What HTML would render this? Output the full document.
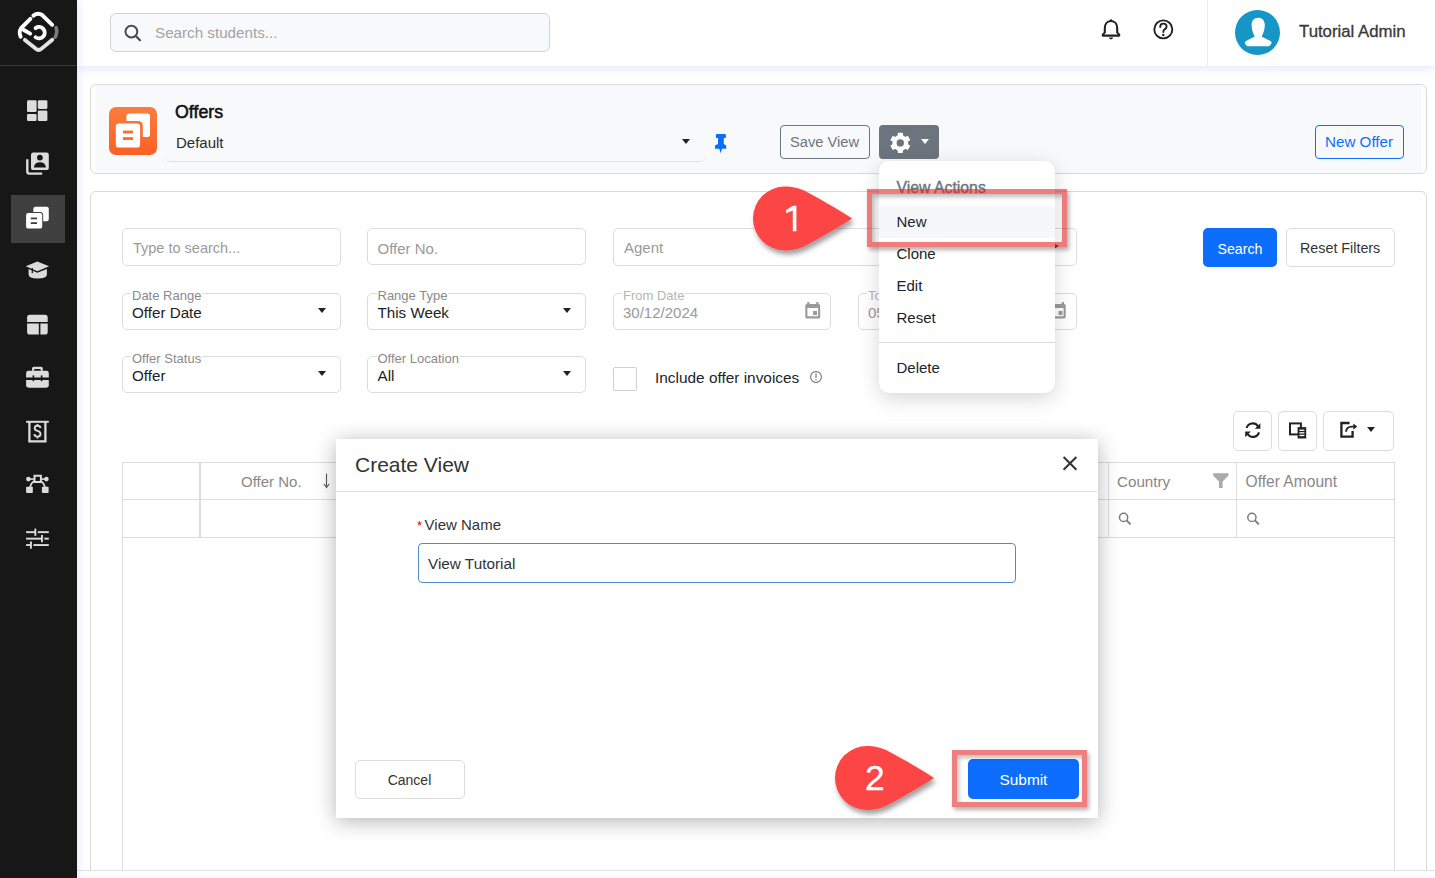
<!DOCTYPE html>
<html><head><meta charset="utf-8">
<style>
*{box-sizing:border-box;margin:0;padding:0}
html,body{width:1435px;height:878px;overflow:hidden;background:#fff;font-family:"Liberation Sans",sans-serif;color:#212529}
.a{position:absolute}
.t{position:absolute;line-height:1;white-space:nowrap}
svg{position:absolute;overflow:visible}
#sidebar{left:0;top:0;width:77px;height:878px;background:#171717;z-index:5;box-shadow:2px 0 7px rgba(120,120,240,.16)}
#header{left:77px;top:0;width:1358px;height:66px;background:#fff;z-index:4;box-shadow:0 2px 9px rgba(110,110,235,.2)}
.inp{position:absolute;border:1px solid #dcdcdc;border-radius:5px;background:#fff}
.fs{position:absolute;border:1px solid #dcdcdc;border-radius:5px;background:#fff}
.lbl{position:absolute;line-height:1;white-space:nowrap;background:#fff;padding:0 1px;font-size:13px;color:#8a8a8a;margin-top:0.9px}
.car{position:absolute;width:0;height:0;border-left:4.5px solid transparent;border-right:4.5px solid transparent;border-top:5px solid #222}
.btn{position:absolute;border-radius:5px}
.ln{position:absolute;background:#dcdcdc}
</style></head><body>

<!-- SIDEBAR -->
<div id="sidebar" class="a">
  <div class="a" style="left:0;top:65px;width:76px;height:1px;background:#3a3a3a"></div>
  <div class="a" style="left:11px;top:195px;width:54px;height:48px;background:#404040"></div>
  <svg style="left:0;top:0" width="77" height="878" viewBox="0 0 77 878">
    <!-- logo -->
    <g fill="none" stroke-linecap="round" stroke-width="3.9">
      <path d="M33.4,15.6 Q37.8,12.2 42.2,15 L52.2,24.8" stroke="#fff"/>
      <path d="M56.1,27.6 Q57.8,32.2 55.2,37.2" stroke="#7c7c7c" stroke-width="3.5"/>
      <path d="M24.9,39.9 L35.6,48.6 Q38.6,51.2 41.6,48.6 L52.3,39.7" stroke="#e2e2e2"/>
      <path d="M30.4,18.8 L21.4,27.8 Q19.2,30.4 19.7,33.4 L20.6,36.8" stroke="#fff"/>
      <path d="M23.8,30 L30.2,33.6" stroke="#fff"/>
      <path d="M35.6,28.1 A5.7,5.7 0 1 1 35.6,37.3" stroke="#fff"/>
    </g>
    <g fill="#dcdcdc">
      <!-- dashboard -->
      <rect x="27" y="100.3" width="9.6" height="11.8" rx="1.3"/>
      <rect x="27" y="113.9" width="9.6" height="7.2" rx="1.3"/>
      <rect x="37.8" y="100.3" width="9.6" height="8.6" rx="1.3"/>
      <rect x="37.8" y="110.5" width="9.6" height="10.6" rx="1.3"/>
      <!-- contacts -->
      <rect x="31" y="152.5" width="17.8" height="17.6" rx="2.2"/>
      <path d="M27.3,159.3 V171.5 Q27.3,173.6 29.4,173.6 H42.2" fill="none" stroke="#dcdcdc" stroke-width="2.4"/>
      <circle cx="39.9" cy="157.6" r="2.9" fill="#171717"/>
      <path d="M33.8,167.6 Q34.5,162.2 39.9,162.2 Q45.3,162.2 46,167.6 Z" fill="#171717"/>
      <!-- grad cap -->
      <path d="M25.8,266.3 L37.3,261.6 L49.1,266.3 L37.3,271.2 Z"/>
      <path d="M28.6,269 L37.3,272.8 L46.9,269 V274.5 Q46.9,278.5 37.5,278.5 Q28.6,278.5 28.6,274.5 Z"/>
      <rect x="31.7" y="268" width="1.2" height="5.2" fill="#171717"/>
      <!-- layout -->
      <path d="M27.1,322 V317.4 Q27.1,314.7 29.8,314.7 H45 Q47.7,314.7 47.7,317.4 V322 Z"/>
      <path d="M27.1,323.6 H38.8 V334.6 H29.8 Q27.1,334.6 27.1,331.9 Z"/>
      <path d="M40.4,323.6 H47.7 V331.9 Q47.7,334.6 45,334.6 H40.4 Z"/>
      <!-- briefcase -->
      <path d="M32,370.8 V368.5 Q32,366.7 33.8,366.7 H41 Q42.8,366.7 42.8,368.5 V370.8 H40.6 V368.9 H34.2 V370.8 Z"/>
      <path d="M26.1,377.4 V373.2 Q26.1,370.8 28.5,370.8 H46.4 Q48.8,370.8 48.8,373.2 V377.4 Z"/>
      <path d="M26.1,380 H48.8 V385.3 Q48.8,387.7 46.4,387.7 H28.5 Q26.1,387.7 26.1,385.3 Z"/>
      <rect x="32.6" y="375.4" width="1.6" height="5.8" fill="#171717"/>
      <rect x="40.8" y="375.4" width="1.6" height="5.8" fill="#171717"/>
      <!-- dollar doc -->
      <rect x="26.1" y="420.8" width="22.7" height="2"/>
      <path d="M29.4,422 V441.4 H45.4 V422" fill="none" stroke="#dcdcdc" stroke-width="2.3"/>
      <path d="M40.6,428 Q40.2,425.8 37.5,425.8 Q34.7,425.8 34.7,428.2 Q34.7,430.3 37.5,430.9 Q40.5,431.5 40.5,434 Q40.5,436.6 37.5,436.6 Q34.7,436.6 34.3,434.2 M37.5,424 V425.8 M37.5,436.6 V438.6" fill="none" stroke="#dcdcdc" stroke-width="1.9"/>
      <!-- bezier -->
      <path d="M33.5,474.7 H41.9 V482.9 H33.5 Z M35.5,476.7 V480.9 H39.9 V476.7 Z" fill-rule="evenodd"/>
      <circle cx="28.4" cy="479.1" r="2.3"/>
      <circle cx="46.4" cy="479.1" r="2.3"/>
      <rect x="28.4" y="478.3" width="5.5" height="1.6"/>
      <rect x="41.5" y="478.3" width="5" height="1.6"/>
      <path d="M30,487.5 Q31.5,481.5 35.2,481.2 M45,487.5 Q43.5,481.5 39.8,481.2" fill="none" stroke="#dcdcdc" stroke-width="1.8"/>
      <rect x="26.1" y="486.7" width="6.7" height="6.3" rx=".8"/>
      <rect x="41.9" y="486.7" width="6.7" height="6.3" rx=".8"/>
      <!-- sliders -->
      <rect x="26.1" y="531.2" width="22.7" height="1.9"/>
      <rect x="26.1" y="537.7" width="22.7" height="1.9"/>
      <rect x="26.1" y="544.1" width="22.7" height="1.9"/>
      <rect x="34.4" y="528.6" width="1.9" height="7.2"/>
      <rect x="41" y="535" width="1.9" height="7.2"/>
      <rect x="30" y="541.5" width="1.9" height="7.2"/>
      <rect x="36.3" y="531" width="1.5" height="2.3" fill="#171717"/>
      <rect x="42.9" y="537.5" width="1.5" height="2.3" fill="#171717"/>
      <rect x="31.9" y="544" width="1.5" height="2.3" fill="#171717"/>
    </g>
    <!-- offers active -->
    <g fill="#fff">
      <rect x="33.3" y="206.7" width="15.5" height="14.5" rx="2.2"/>
      <rect x="25.1" y="212.1" width="18.1" height="17.5" rx="3" fill="#404040"/>
      <rect x="26.1" y="213.1" width="16.1" height="15.5" rx="2.2"/>
      <rect x="30.8" y="217.5" width="6.2" height="1.8" fill="#404040"/>
      <rect x="30.8" y="222.2" width="6.2" height="1.8" fill="#404040"/>
    </g>
  </svg>
</div>

<!-- HEADER -->
<div id="header" class="a"></div>
<div class="a" style="z-index:6;left:110px;top:13px;width:440px;height:39px;background:#f8f9fb;border:1px solid #d3d3d3;border-radius:6px"></div>
<div class="t" style="z-index:6;left:155px;top:25px;font-size:15.2px;color:#a3a3a3">Search students...</div>
<div class="a" style="z-index:6;left:1207px;top:0;width:1px;height:66px;background:#ececec"></div>
<div class="a" style="z-index:6;left:1235px;top:10px;width:45px;height:45px;border-radius:50%;background:#1596c7"></div>
<div class="t" style="z-index:6;left:1299px;top:24.4px;font-size:16.8px;color:#383838;-webkit-text-stroke:0.3px #383838">Tutorial Admin</div>

<svg style="z-index:7;left:0;top:0" width="1435" height="70" viewBox="0 0 1435 70">
  <!-- search icon -->
  <circle cx="131.4" cy="31.6" r="5.9" fill="none" stroke="#444b52" stroke-width="2"/>
  <path d="M135.8,36 L140,40.2" stroke="#444b52" stroke-width="2.2" stroke-linecap="round"/>
  <!-- bell -->
  <path d="M1111,21 C1106.6,21 1104.8,24.6 1104.8,28.2 V32.4 L1102.8,34.6 V35.6 H1119.2 V34.6 L1117.2,32.4 V28.2 C1117.2,24.6 1115.4,21 1111,21 Z" fill="none" stroke="#222" stroke-width="2.1" stroke-linejoin="round"/>
  <path d="M1108.8,37.6 Q1109.2,39.4 1111,39.4 Q1112.8,39.4 1113.2,37.6 Z" fill="#222"/>
  <circle cx="1111" cy="20.4" r="1.2" fill="#222"/>
  <!-- help -->
  <circle cx="1163.3" cy="29.4" r="9" fill="none" stroke="#222" stroke-width="1.9"/>
  <path d="M1160.2,27 Q1160.2,23.6 1163.4,23.6 Q1166.6,23.6 1166.6,26.6 Q1166.6,28.4 1164.6,29.4 Q1163.3,30.2 1163.3,32" fill="none" stroke="#222" stroke-width="1.9" stroke-linecap="round"/>
  <circle cx="1163.3" cy="35" r="1.2" fill="#222"/>
  <!-- avatar person -->
  <path d="M1258.2,17.8 C1253.6,17.8 1251.4,21.2 1251.6,25.6 C1251.8,30 1253.2,34 1254.8,36.6 L1247,40.4 C1244.8,41.4 1244.2,42.6 1245.4,44.2 L1247.4,46.2 H1269 L1271,44.2 C1272.2,42.6 1271.6,41.4 1269.4,40.4 L1261.6,36.6 C1263.2,34 1264.6,30 1264.8,25.6 C1265,21.2 1262.8,17.8 1258.2,17.8 Z" fill="#fff"/>
</svg>

<!-- CARD 1 -->
<div class="a" style="left:90px;top:84px;width:1337px;height:90px;background:#fdfdfe;border:1px solid #d9d9d9;border-radius:6px"><div class="a" style="left:5px;top:0;width:1325px;height:88px;background:#f8f9fa"></div></div>
<div class="a" style="left:109px;top:107px;width:48px;height:48px;border-radius:7px;background:linear-gradient(#fa7c3e,#fc6124)"></div>
<svg style="z-index:3;left:0;top:0" width="1435" height="180" viewBox="0 0 1435 180">
  <g fill="#fff">
    <mask id="om"><rect x="100" y="100" width="70" height="70" fill="#fff"/><rect x="113.4" y="121" width="29.4" height="29.2" rx="4.6" fill="#000"/></mask>
    <rect x="126.4" y="113.5" width="23.6" height="23.6" rx="3.2" mask="url(#om)"/>
    <rect x="115.8" y="123.6" width="24.3" height="24" rx="3.2"/>
    <rect x="123" y="130.6" width="10" height="2.8" fill="#fb6d2e"/>
    <rect x="123" y="137.2" width="10" height="2.8" fill="#fb692b"/>
  </g>
  <!-- pin -->
  <path d="M716.8,134.1 H725 Q725.9,134.1 725.9,135 V137.9 H723.8 V144 L726.2,145.6 V148.8 H722 L720.6,153.2 L719.3,148.8 H715 V145.6 L718,144 V137.9 H715.9 V135 Q715.9,134.1 716.8,134.1 Z" fill="#0d6efd"/>
  <!-- gear -->
  <g transform="translate(900.3,142.9)" fill="#fff">
    <mask id="gm"><rect x="-12" y="-12" width="24" height="24" fill="#fff"/><circle r="3.7" fill="#000"/></mask>
    <g mask="url(#gm)"><circle r="7.9"/><rect x="-2.6" y="-10.1" width="5.2" height="5" rx=".7" transform="rotate(0)"/><rect x="-2.6" y="-10.1" width="5.2" height="5" rx=".7" transform="rotate(60)"/><rect x="-2.6" y="-10.1" width="5.2" height="5" rx=".7" transform="rotate(120)"/><rect x="-2.6" y="-10.1" width="5.2" height="5" rx=".7" transform="rotate(180)"/><rect x="-2.6" y="-10.1" width="5.2" height="5" rx=".7" transform="rotate(240)"/><rect x="-2.6" y="-10.1" width="5.2" height="5" rx=".7" transform="rotate(300)"/></g>
  </g>
</svg>
<div class="t" style="z-index:3;left:175px;top:103.7px;font-size:17.8px;color:#111;-webkit-text-stroke:0.55px #111">Offers</div>
<div class="a" style="left:166px;top:120px;width:539px;height:42px;border-bottom:1px solid #dee2e6;border-radius:0 0 5px 5px"></div>
<div class="t" style="left:176px;top:135.2px;font-size:15px;color:#2b2b2b">Default</div>
<div class="car" style="left:682px;top:139px"></div>
<div class="btn" style="left:780px;top:125px;width:90px;height:34px;border:1px solid #6c757d;border-radius:4px"></div>
<div class="t" style="left:790px;top:135px;font-size:14.7px;color:#6c757d">Save View</div>
<div class="btn" style="left:879px;top:125px;width:60px;height:34px;background:#6c757d;border-radius:4px"></div>
<div class="car" style="left:921px;top:139px;border-top-color:#fff"></div>
<div class="btn" style="left:1315px;top:125px;width:89px;height:34px;border:1px solid #0d6efd;border-radius:4px"></div>
<div class="t" style="left:1325px;top:134.3px;font-size:15.2px;color:#0d6efd">New Offer</div>

<!-- CARD 2 -->
<div class="a" style="left:90px;top:191px;width:1337px;height:720px;background:#fff;border:1px solid #d9d9d9;border-radius:6px"></div>

<div class="inp" style="left:122px;top:228px;width:219px;height:38px"></div>
<div class="t" style="left:133px;top:240.5px;font-size:14.5px;color:#9a9a9a">Type to search...</div>
<div class="inp" style="left:367px;top:228px;width:219px;height:37px"></div>
<div class="t" style="left:377.5px;top:241.1px;font-size:15px;color:#9a9a9a">Offer No.</div>
<div class="inp" style="left:613px;top:228px;width:464px;height:38px"></div>
<div class="t" style="left:624px;top:239.5px;font-size:15px;color:#9a9a9a">Agent</div>
<div class="btn" style="left:1203px;top:228px;width:74px;height:39px;background:#0d6efd"></div>
<div class="t" style="left:1217.5px;top:241.5px;font-size:14.2px;color:#fff">Search</div>
<div class="btn" style="left:1286px;top:228px;width:109px;height:39px;border:1px solid #dcdcdc"></div>
<div class="t" style="left:1300px;top:241.4px;font-size:14.3px;color:#333">Reset Filters</div>

<div class="fs" style="left:122px;top:293px;width:219px;height:37px"></div>
<div class="lbl" style="left:131px;top:288.4px">Date Range</div>
<div class="t" style="left:132px;top:305.1px;font-size:15.2px;color:#222">Offer Date</div>
<div class="car" style="left:318px;top:308px"></div>
<div class="fs" style="left:367px;top:293px;width:219px;height:37px"></div>
<div class="lbl" style="left:376.5px;top:288.4px">Range Type</div>
<div class="t" style="left:377.5px;top:305.1px;font-size:15.2px;color:#222">This Week</div>
<div class="car" style="left:563px;top:308px"></div>
<div class="fs" style="left:613px;top:293px;width:218px;height:37px"></div>
<div class="lbl" style="left:622px;top:288.4px;color:#b5b5b5">From Date</div>
<div class="t" style="left:623px;top:305.3px;font-size:15px;color:#9a9a9a">30/12/2024</div>
<div class="fs" style="left:858px;top:293px;width:219px;height:37px"></div>
<div class="lbl" style="left:867px;top:288.4px;color:#b5b5b5">To Date</div>
<div class="t" style="left:868px;top:305.3px;font-size:15px;color:#9a9a9a">05/01/2025</div>

<div class="fs" style="left:122px;top:356px;width:219px;height:37px"></div>
<div class="lbl" style="left:131px;top:351.2px">Offer Status</div>
<div class="t" style="left:132px;top:368px;font-size:15.2px;color:#222">Offer</div>
<div class="car" style="left:318px;top:371px"></div>
<div class="fs" style="left:367px;top:356px;width:219px;height:37px"></div>
<div class="lbl" style="left:376.5px;top:351.2px">Offer Location</div>
<div class="t" style="left:377.5px;top:368px;font-size:15.2px;color:#222">All</div>
<div class="car" style="left:563px;top:371px"></div>
<div class="a" style="left:613px;top:367px;width:24px;height:24px;border:1px solid #d0d0d0;border-radius:2px"></div>
<div class="t" style="left:655px;top:370px;font-size:15.4px;color:#212529">Include offer invoices</div>

<!-- toolbar -->
<div class="btn" style="left:1233px;top:411px;width:39px;height:40px;border:1px solid #dcdcdc"></div>
<div class="btn" style="left:1278px;top:411px;width:39px;height:40px;border:1px solid #dcdcdc"></div>
<div class="btn" style="left:1323px;top:411px;width:71px;height:40px;border:1px solid #dcdcdc"></div>
<div class="car" style="left:1367px;top:427px"></div>

<!-- table -->
<div class="a" style="left:122px;top:462px;width:1273px;height:420px;border:1px solid #dcdcdc"></div>
<div class="ln" style="left:122px;top:499px;width:1273px;height:1px"></div>
<div class="ln" style="left:122px;top:537px;width:1273px;height:1px"></div>
<div class="ln" style="left:199px;top:462px;width:2px;height:75px"></div>
<div class="ln" style="left:1108px;top:462px;width:1px;height:75px"></div>
<div class="ln" style="left:1236px;top:462px;width:1px;height:75px"></div>
<div class="t" style="left:241px;top:474.1px;font-size:15px;color:#888">Offer No.</div>
<div class="t" style="left:1117px;top:473.7px;font-size:15.2px;color:#888">Country</div>
<div class="t" style="left:1245.5px;top:473.6px;font-size:15.6px;color:#888">Offer Amount</div>

<svg style="z-index:2;left:0;top:0" width="1435" height="878" viewBox="0 0 1435 878">
  <!-- calendars -->
  <g fill="#9a9a9a">
    <path fill-rule="evenodd" d="M805.3,305.6 Q805.3,304 806.9,304 H818.6 Q820.2,304 820.2,305.6 V316.9 Q820.2,318.5 818.6,318.5 H806.9 Q805.3,318.5 805.3,316.9 Z M807.4,307.9 V316.3 H818.1 V307.9 Z"/>
    <rect x="807.2" y="302.1" width="2.3" height="3"/><rect x="816.2" y="302.1" width="2.3" height="3"/>
    <rect x="813" y="311" width="4" height="4"/>
  </g>
  <g fill="#9a9a9a" transform="translate(245.5,0)">
    <path fill-rule="evenodd" d="M805.3,305.6 Q805.3,304 806.9,304 H818.6 Q820.2,304 820.2,305.6 V316.9 Q820.2,318.5 818.6,318.5 H806.9 Q805.3,318.5 805.3,316.9 Z M807.4,307.9 V316.3 H818.1 V307.9 Z"/>
    <rect x="807.2" y="302.1" width="2.3" height="3"/><rect x="816.2" y="302.1" width="2.3" height="3"/>
    <rect x="813" y="311" width="4" height="4"/>
  </g>
  <!-- info -->
  <circle cx="816" cy="377" r="5.4" fill="none" stroke="#777" stroke-width="1.1"/>
  <rect x="815.4" y="373.6" width="1.2" height="4.4" fill="#777"/>
  <rect x="815.4" y="379" width="1.2" height="1.2" fill="#777"/>
  <!-- refresh -->
  <g fill="none" stroke="#222" stroke-width="2.1">
    <path d="M1246.6,428 A6.3,6.3 0 0 1 1258,426.4"/>
    <path d="M1259,432.4 A6.3,6.3 0 0 1 1247.6,434"/>
  </g>
  <path d="M1260.4,423.2 V428.8 H1254.8 Z" fill="#222"/>
  <path d="M1245.2,437.2 V431.6 H1250.8 Z" fill="#222"/>
  <!-- columns -->
  <rect x="1290" y="423.4" width="10.9" height="11" fill="none" stroke="#222" stroke-width="2"/>
  <rect x="1297.6" y="427.1" width="8.6" height="11.4" fill="#222"/>
  <rect x="1299.4" y="429.6" width="5" height="1.3" fill="#fff"/>
  <rect x="1299.4" y="432.2" width="5" height="1.3" fill="#fff"/>
  <rect x="1299.4" y="434.8" width="5" height="1.3" fill="#fff"/>
  <!-- export -->
  <path d="M1349.6,423 H1341.4 V436.7 H1352.6 V431" fill="none" stroke="#222" stroke-width="2.3"/>
  <path d="M1346,431.8 Q1346.4,426.6 1352,426.6 H1354" fill="none" stroke="#222" stroke-width="1.9"/>
  <path d="M1353.4,423.6 L1357.2,426.6 L1353.4,429.8 Z" fill="#222"/>
  <!-- sort arrow -->
  <path d="M326.5,473.6 V486" stroke="#555" stroke-width="1.1"/>
  <path d="M324,484 L326.5,487.6 L329,484" fill="none" stroke="#555" stroke-width="1.1"/>
  <path d="M1051,242 L1059.2,246 L1051,250.1 Z" fill="#222"/>
  <!-- funnel -->
  <path d="M1213.1,473.2 H1228.5 V475.4 L1222.6,481.4 V487.9 H1219 V481.4 L1213.1,475.4 Z" fill="#aaa"/>
  <!-- table search icons -->
  <g fill="none" stroke="#7a7a7a" stroke-width="1.5">
    <circle cx="1123.6" cy="517.4" r="4.1"/><path d="M1126.6,520.4 L1130.6,524.4" stroke-width="1.8"/>
    <circle cx="1251.9" cy="517.4" r="4.1"/><path d="M1254.9,520.4 L1258.9,524.4" stroke-width="1.8"/>
  </g>
</svg>

<!-- footer line -->
<div class="a" style="left:77px;top:870px;width:1358px;height:8px;background:#fff;border-top:1px solid #e2e2e2"></div>

<!-- DROPDOWN MENU -->
<div class="a" style="z-index:10;left:879px;top:161px;width:176px;height:232px;background:#fff;border-radius:10px;box-shadow:0 5px 20px rgba(0,0,0,.17)">
  <div class="a" style="left:0;top:45px;width:176px;height:32px;background:#f6f7f9"></div>
  <div class="a" style="left:0;top:181px;width:176px;height:1px;background:#dadada"></div>
</div>
<div class="t" style="z-index:11;left:896.5px;top:180.3px;font-size:15.8px;color:#6c757d;-webkit-text-stroke:0.4px #6c757d">View Actions</div>
<div class="t" style="z-index:11;left:896.5px;top:214px;font-size:15px;color:#212529">New</div>
<div class="t" style="z-index:11;left:896.5px;top:246.2px;font-size:15px;color:#212529">Clone</div>
<div class="t" style="z-index:11;left:896.5px;top:278px;font-size:15px;color:#212529">Edit</div>
<div class="t" style="z-index:11;left:896.5px;top:310.2px;font-size:15px;color:#212529">Reset</div>
<div class="t" style="z-index:11;left:896.5px;top:360px;font-size:15px;color:#212529">Delete</div>

<!-- MODAL -->
<div class="a" style="z-index:20;left:336px;top:439px;width:762px;height:379px;background:#fff;box-shadow:0 3px 20px rgba(0,0,0,.3)">
  <div class="a" style="left:0;top:52px;width:761px;height:1px;background:#dcdcdc"></div>
</div>
<div class="t" style="z-index:21;left:355px;top:454px;font-size:21px;color:#333">Create View</div>
<svg style="z-index:21;left:0;top:0" width="1" height="1"><path d="M1063.6,457 L1076.4,469.8 M1076.4,457 L1063.6,469.8" stroke="#333" stroke-width="2"/></svg>
<div class="t" style="z-index:21;left:417px;top:519px;font-size:13px;color:#e00">*</div>
<div class="t" style="z-index:21;left:424.6px;top:516.9px;font-size:15px;color:#333">View Name</div>
<div class="a" style="z-index:21;left:418px;top:543px;width:598px;height:40px;border:1.3px solid #4f8ccc;border-radius:4px"></div>
<div class="t" style="z-index:21;left:428px;top:555.9px;font-size:15.3px;color:#333">View Tutorial</div>
<div class="btn" style="z-index:21;left:355px;top:760px;width:110px;height:39px;border:1px solid #dcdcdc"></div>
<div class="t" style="z-index:21;left:387.7px;top:773px;font-size:14px;color:#333">Cancel</div>
<div class="btn" style="z-index:21;left:968px;top:759px;width:111px;height:40px;background:#0d6efd"></div>
<div class="t" style="z-index:21;left:999.5px;top:772px;font-size:15.4px;color:#fff">Submit</div>

<!-- BADGES -->
<svg style="z-index:31;left:0;top:0" width="1435" height="878" viewBox="0 0 1435 878">
  <defs><filter id="ds" x="-30%" y="-30%" width="160%" height="170%"><feDropShadow dx="2" dy="4" stdDeviation="2.5" flood-color="#000" flood-opacity=".38"/></filter></defs>
  <g filter="url(#ds)">
    <path d="M852,218.5 C836,208 818,198 805,191 C797,187.5 791,186.5 785,186.5 A32,32 0 0 0 785,250.5 C791,250.5 797,249.5 805,246 C818,239 836,229 852,218.5 Z" fill="#fc4444"/>
    <path d="M934,778 C918,767.5 900,757.5 887,750.5 C879,747 873,746 867,746 A32,32 0 0 0 867,810 C873,810 879,809 887,805.5 C900,798.5 918,788.5 934,778 Z" fill="#fc4444"/>
  </g>
</svg>
<svg style="z-index:32;left:0;top:0" width="1" height="1"><path d="M792.8,205.7 L796.4,205.7 L796.4,231.2 L792.8,231.2 L792.8,210.6 L786.2,213.2 L786.2,210.0 Z" fill="#fff"/></svg>
<div class="t" style="z-index:32;left:865px;top:761.3px;font-size:35.4px;color:#fff;-webkit-text-stroke:0.3px #fff">2</div>

<!-- RED BOXES -->
<div class="a" style="z-index:30;left:867px;top:189px;width:200px;height:58px;border:5px solid rgba(228,40,40,.6);box-shadow:2px 3px 4px rgba(0,0,0,.3),inset 2px 3px 4px rgba(0,0,0,.25)"></div>
<div class="a" style="z-index:30;left:952px;top:750px;width:135px;height:57px;border:5px solid rgba(228,40,40,.6);box-shadow:2px 3px 4px rgba(0,0,0,.3),inset 2px 3px 4px rgba(0,0,0,.25)"></div>

</body></html>
